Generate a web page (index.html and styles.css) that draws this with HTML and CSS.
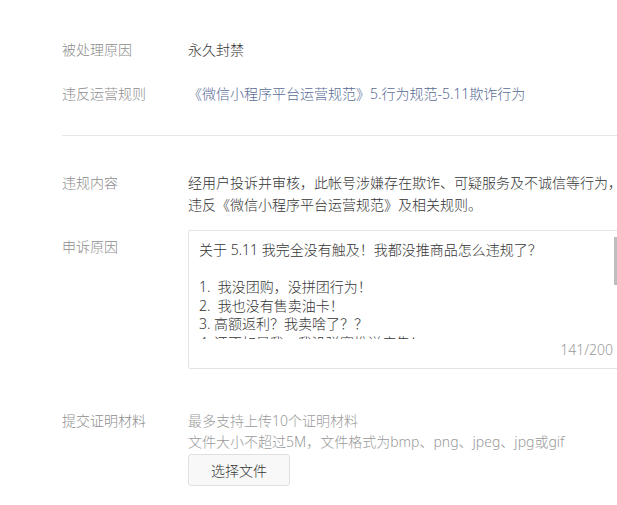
FILE: index.html
```html
<!DOCTYPE html>
<html>
<head>
    <meta charset="utf-8">
    <meta name="viewport" content="width=device-width, initial-scale=1">
    <title>申诉</title>
    <link rel="stylesheet" href="styles.css">
</head>
<body>
    <div class="page">
        <!-- punishment info -->
        <div class="row first">
            <div class="label">被处理原因</div>
            <div class="value">永久封禁</div>
        </div>
        <div class="row">
            <div class="label">违反运营规则</div>
            <div class="value"><a href="#" class="link">《微信小程序平台运营规范》5.行为规范-5.11欺诈行为</a></div>
        </div>

        <div class="divider"></div>

        <div class="row content-row">
            <div class="label">违规内容</div>
            <div class="value">经用户投诉并审核，此帐号涉嫌存在欺诈、可疑服务及不诚信等行为，<br>违反《微信小程序平台运营规范》及相关规则。</div>
        </div>

        <!-- appeal reason -->
        <div class="row appeal-row">
            <div class="label appeal-label">申诉原因</div>
            <div class="textbox">
                <div class="textbox-inner">关于 5.11 我完全没有触及！我都没推商品怎么违规了？

1.  我没团购，没拼团行为！
2.  我也没有售卖油卡！
3. 高额返利？我卖啥了？？
4. 还不如是我，我没弹窗推送广告！</div>
                <div class="scroll-thumb"></div>
                <div class="counter">141/200</div>
            </div>
        </div>

        <!-- upload -->
        <div class="row upload-row">
            <div class="label">提交证明材料</div>
            <div class="value">
                <div class="hint">最多支持上传10个证明材料</div>
                <div class="hint">文件大小不超过5M，文件格式为bmp、png、jpeg、jpg或gif</div>
                <button class="file-btn">选择文件</button>
            </div>
        </div>
    </div>
</body>
</html>
```

FILE: styles.css
```css
* {
    box-sizing: border-box;
}
body {
    margin: 0;
    overflow: hidden;
    background: #fff;
    font-family: "Noto Sans", "Noto Sans CJK SC", sans-serif;
    font-size: 14px;
    font-weight: 300;
    color: #353535;
}
.page {
    width: 700px;
    padding-left: 62px;
    padding-top: 39px;
}
.row {
    display: flex;
    line-height: 22px;
    margin-bottom: 22px;
}
.label {
    width: 126px;
    flex-shrink: 0;
    color: #8d8d8d;
}
.value {
    color: #353535;
}
.link {
    color: #576b95;
    text-decoration: none;
}
.divider {
    height: 1px;
    background: #e7e7e7;
    margin-top: 30px;
    margin-bottom: 36px;
}
.content-row {
    margin-bottom: 14px;
}
.appeal-label {
    padding-top: 6px;
}
.textbox {
    position: relative;
    width: 433px;
    height: 139px;
    border: 1px solid #e4e4e4;
    border-radius: 2px;
}
.textbox-inner {
    height: 108px;
    overflow: hidden;
    padding: 10px 10px 0;
    line-height: 18.5px;
    white-space: pre-wrap;
    color: #353535;
}
.scroll-thumb {
    position: absolute;
    right: 3px;
    top: 6px;
    width: 3px;
    height: 48px;
    background: #bdbdbd;
}
.counter {
    position: absolute;
    right: 7px;
    bottom: 7px;
    color: #9a9a9a;
    line-height: 22px;
}
.upload-row {
    margin-top: 41px;
}
.hint {
    color: #9a9a9a;
    line-height: 21px;
}
.file-btn {
    margin-top: 2px;
    width: 102px;
    height: 32px;
    background: #f8f8f8;
    border: 1px solid #e0e0e0;
    border-radius: 3px;
    font-family: inherit;
    font-size: 14px;
    font-weight: 300;
    color: #353535;
}
```
